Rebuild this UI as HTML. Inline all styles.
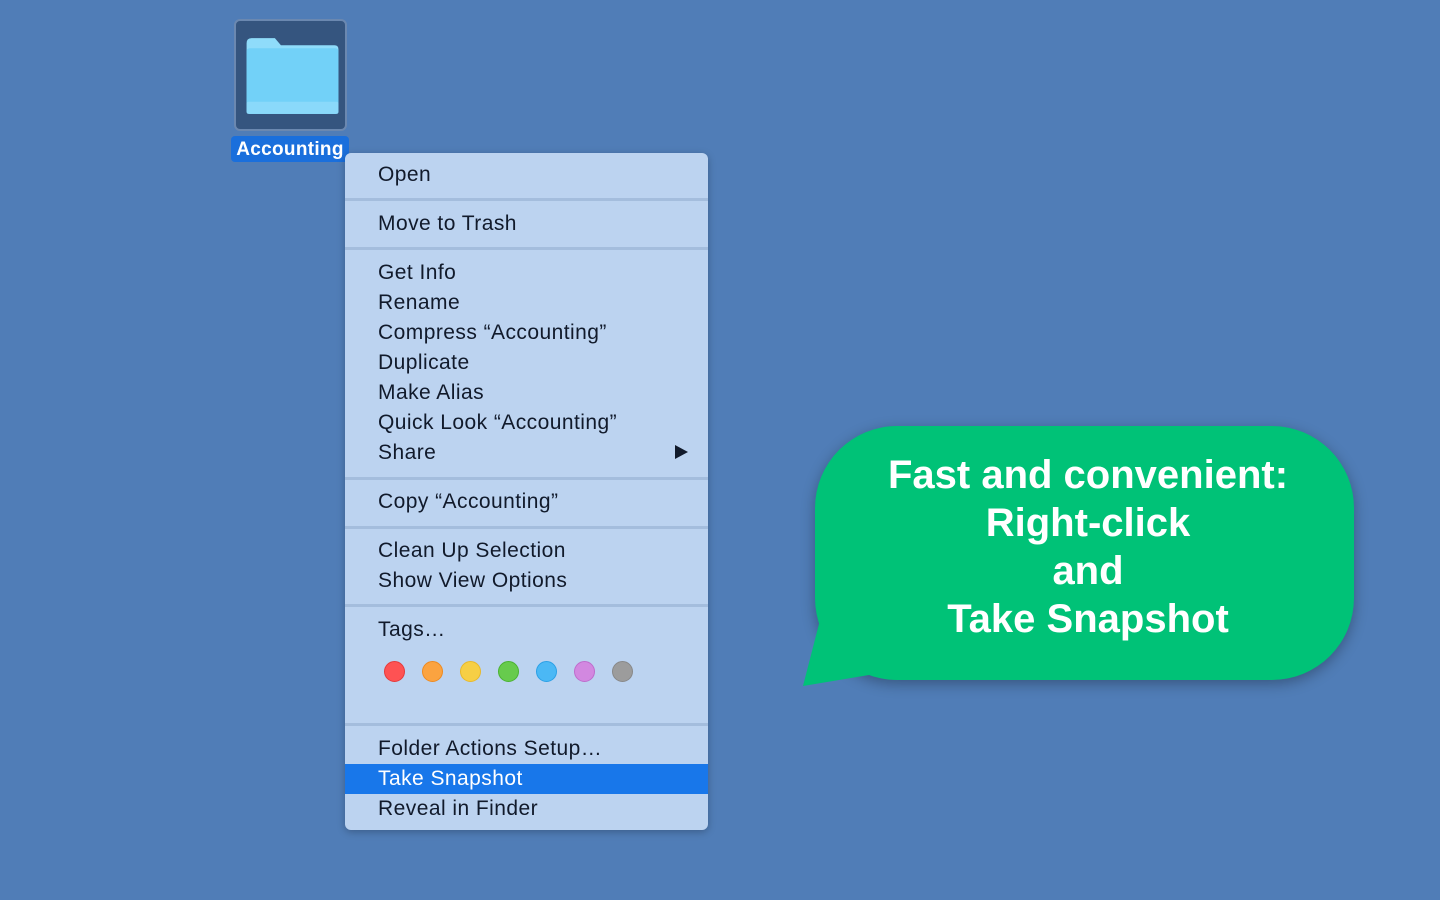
<!DOCTYPE html>
<html><head><meta charset="utf-8"><style>
body{margin:0;width:1440px;height:900px;background:#507db7;position:relative;overflow:hidden;font-family:"Liberation Sans",sans-serif}
.icon{position:absolute;left:234px;top:19px;width:113px;height:112px;background:#35557f;border:2px solid #6b88b0;border-radius:6px;box-sizing:border-box}
.lbl{position:absolute;left:231px;top:136px;width:118px;height:26px;background:#1a6fdc;border-radius:4px;color:#fff;font-weight:bold;font-size:19px;line-height:27px;text-align:center;letter-spacing:0.3px}
.menu{position:absolute;left:345px;top:153px;width:363px;height:677px;background:#bcd3f0;border-radius:6px;box-shadow:0 2px 8px rgba(0,0,0,.25)}
.it{position:absolute;left:33px;font-size:21px;color:#111a2b;line-height:32px;height:30px;letter-spacing:0.45px}
.sep{position:absolute;left:0;width:363px;height:3px;background:#a4bddd}
.hl{position:absolute;left:0;top:611px;width:363px;height:30px;background:#1877ea}
.dot{position:absolute;top:508px;width:21px;height:21px;border-radius:50%;box-sizing:border-box}
.bub{position:absolute;left:815px;top:426px;width:539px;height:254px;background:#00c277;border-radius:82px;box-shadow:0 4px 14px rgba(0,0,0,.3)}
.bt{position:absolute;left:815px;top:451px;width:546px;text-align:center;color:#fff;font-weight:bold;font-size:40px;line-height:48px}
</style></head><body>
<div class="icon"><svg width="109" height="108" viewBox="0 0 107 107" style="position:absolute;left:0;top:0"><path d="M10 22 Q10 17 15 17 L38 17 L44 24 L97 24 Q101 24 101 28 L101 89 Q101 92 97 92 L14 92 Q10 92 10 89 Z" fill="#8fdcfa"/><rect x="10" y="27" width="91" height="65" rx="3" fill="#72d1f8"/><rect x="10" y="80" width="91" height="12" rx="2" fill="#8ad9fa"/></svg></div>
<div class="lbl">Accounting</div>
<div class="menu">
<div class="it" style="top:6px">Open</div>
<div class="sep" style="top:45px"></div>
<div class="it" style="top:55px">Move to Trash</div>
<div class="sep" style="top:94px"></div>
<div class="it" style="top:104px">Get Info</div>
<div class="it" style="top:134px">Rename</div>
<div class="it" style="top:164px">Compress “Accounting”</div>
<div class="it" style="top:194px">Duplicate</div>
<div class="it" style="top:224px">Make Alias</div>
<div class="it" style="top:254px">Quick Look “Accounting”</div>
<div class="it" style="top:284px">Share</div>
<svg style="position:absolute;left:329px;top:291px" width="16" height="16"><path d="M1 1 L14 8 L1 15Z" fill="#111a2b"/></svg>
<div class="sep" style="top:324px"></div>
<div class="it" style="top:333px">Copy “Accounting”</div>
<div class="sep" style="top:373px"></div>
<div class="it" style="top:382px">Clean Up Selection</div>
<div class="it" style="top:412px">Show View Options</div>
<div class="sep" style="top:451px"></div>
<div class="it" style="top:461px">Tags…</div>
<div class="dot" style="left:39px;background:#fe5253;border:1px solid #e53a3b"></div>
<div class="dot" style="left:77px;background:#fba340;border:1px solid #ee8a20"></div>
<div class="dot" style="left:115px;background:#f6cf45;border:1px solid #e8b92a"></div>
<div class="dot" style="left:153px;background:#67cb4d;border:1px solid #4bb232"></div>
<div class="dot" style="left:191px;background:#4bb8f5;border:1px solid #2ba0e6"></div>
<div class="dot" style="left:229px;background:#d288e0;border:1px solid #be6ccc"></div>
<div class="dot" style="left:267px;background:#9c9c9c;border:1px solid #888"></div>
<div class="sep" style="top:570px"></div>
<div class="it" style="top:580px">Folder Actions Setup…</div>
<div class="hl"></div>
<div class="it" style="top:610px;color:#fff">Take Snapshot</div>
<div class="it" style="top:640px">Reveal in Finder</div>
</div>
<div class="bub"></div>
<svg style="position:absolute;left:795px;top:600px" width="120" height="100"><path d="M25 20 L8 86 L80 74 L60 20 Z" fill="#00c277"/></svg>
<div class="bt">Fast and convenient:<br>Right-click<br>and<br>Take Snapshot</div>
</body></html>
